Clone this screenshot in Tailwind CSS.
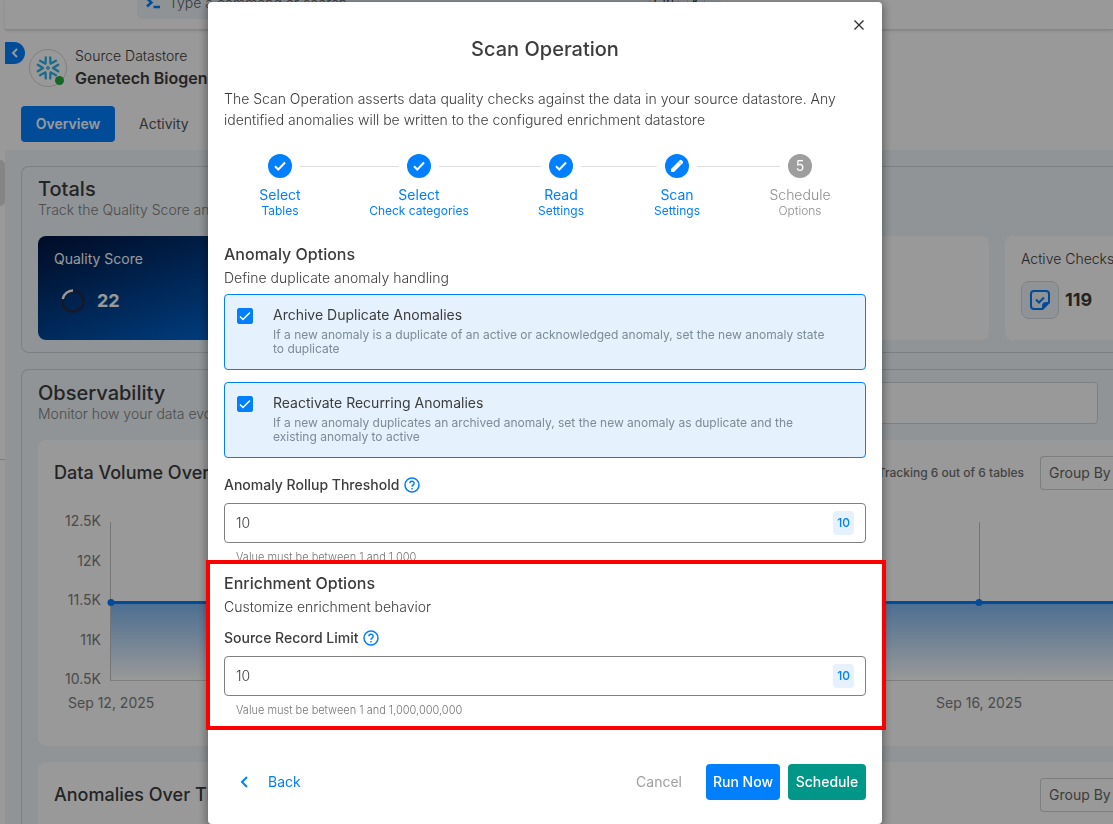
<!DOCTYPE html>
<html lang="en">
<head>
<meta charset="utf-8">
<meta name="viewport" content="width=device-width, initial-scale=1">
<title>Scan Operation</title>
<script src="https://cdn.jsdelivr.net/npm/@tailwindcss/browser@4"></script>
</head>
<body class="h-screen overflow-hidden bg-white font-['Inter',sans-serif] text-sm text-[#3c3c3c]">

<!-- Datastore page behind the dialog -->
<div class="flex h-screen overflow-hidden">
  <aside class="flex w-[5px] shrink-0 flex-col">
    <div class="mt-40 h-[46px] rounded-r-lg bg-[#dedede]"></div>
    <div class="mt-[253px] border-t border-[#d0d0d0]"></div>
  </aside>
  <main class="min-w-0 flex-1">
    <header class="relative h-[30px] border-b border-[#dcdcdc] pl-[132px] shadow-sm">
      <div class="flex h-[19px] w-[584px] items-start gap-2 rounded-b-md bg-[#eef5fb] pl-2">
        <svg class="mt-[-3px] h-3 w-4" viewBox="0 0 16 12" fill="none" stroke="#007fff" stroke-width="2.4"><path d="M2 1.5l4.5 4L2 9.500M8.500 10H15"/></svg>
        <span class="mt-[-7px] leading-5 font-light text-[#606060]">Type a command or search</span>
        <span class="mt-[-7px] ml-auto flex gap-2 pr-4 text-xs leading-4"><kbd class="rounded border border-[#cfcfcf] px-1 font-['Inter',sans-serif]">Ctrl</kbd><kbd class="rounded border border-[#cfcfcf] px-1 font-['Inter',sans-serif]">K</kbd></span>
      </div>
    </header>

    <div class="h-[120px] pt-3">
      <div class="flex gap-1">
        <button type="button" aria-label="Collapse" class="flex h-[22px] w-5 items-center justify-center rounded-r-full bg-[#007fff]">
          <svg class="h-3 w-3" viewBox="0 0 12 12" fill="none" stroke="#fff" stroke-width="2"><path d="M8 2L4 6l4 4"/></svg>
        </button>
        <div class="relative mt-[7px] flex size-[38px] items-center justify-center rounded-full border border-[#d6d6d6]">
          <svg class="size-6" viewBox="0 0 24 24" fill="none" stroke="#29b5e8" stroke-width="2.300" stroke-linecap="round" stroke-linejoin="round">
            <defs><path id="arm" d="M22.200 8.700L17 12l5.200 3.300"/></defs>
            <path d="M12 10.500L13.500 12 12 13.500 10.500 12z" stroke-width="1.200"/>
            <use href="#arm"/>
            <use href="#arm" transform="rotate(60 12 12)"/>
            <use href="#arm" transform="rotate(120 12 12)"/>
            <use href="#arm" transform="rotate(180 12 12)"/>
            <use href="#arm" transform="rotate(240 12 12)"/>
            <use href="#arm" transform="rotate(300 12 12)"/>
          </svg>
          <span class="absolute right-[2px] bottom-[1px] size-[9px] rounded-full bg-[#1fae3d]"></span>
        </div>
        <div class="ml-1 pt-1">
          <p class="leading-5 font-light">Source Datastore</p>
          <h1 class="text-base leading-6 font-semibold whitespace-nowrap">Genetech Biogenius</h1>
        </div>
      </div>
      <nav class="mt-4 ml-4 flex h-9 items-stretch">
        <a href="#" class="flex w-[94px] items-center justify-center rounded bg-[#007fff] font-semibold text-white">Overview</a>
        <a href="#" class="ml-6 flex items-center text-[#555555]">Activity</a>
      </nav>
    </div>

    <div class="h-[900px] bg-[#f0f7fc] pt-4 pl-4">
      <section class="h-[187px] rounded-l-lg border-y border-l border-[#d0d6da] pt-[11px] pl-4">
        <h2 class="text-xl leading-[22px] font-medium">Totals</h2>
        <p class="leading-5 font-light whitespace-nowrap text-[#808080]">Track the Quality Score and key metrics</p>
        <div class="mt-4 flex gap-4 overflow-hidden">
          <div class="h-[104px] w-[306px] shrink-0 rounded-lg bg-linear-to-br from-[#001540] to-[#007fff] px-4 pt-[13px] text-white">
            <h3 class="leading-5">Quality Score</h3>
            <div class="mt-[19px] flex items-center gap-3 pl-[7px]">
              <svg class="size-6" viewBox="0 0 24 24" fill="none" stroke-width="2.500"><circle cx="12" cy="12" r="10.500" stroke="#242b42"/><path d="M12 1.500A10.500 10.500 0 0 0 1.700 10" stroke="#fff"/></svg>
              <span class="text-lg leading-[26px] font-bold">22</span>
            </div>
          </div>
          <div class="h-[104px] w-[306px] shrink-0 rounded-lg bg-white"></div>
          <div class="h-[104px] w-[307px] shrink-0 rounded-lg bg-white"></div>
          <div class="h-[104px] w-[306px] shrink-0 rounded-lg bg-white px-4 pt-[13px]">
            <h3 class="leading-5 font-light">Active Checks</h3>
            <div class="mt-3 flex items-center gap-[6px]">
              <span class="flex size-[38px] items-center justify-center rounded-lg border border-[#d0d9e0] bg-[#eef5fb]">
                <svg class="size-5" viewBox="0 0 20 20" fill="none" stroke="#007fff" stroke-width="2"><path d="M12.500 19H4a3 3 0 0 1-3-3V4a3 3 0 0 1 3-3h12a3 3 0 0 1 3 3v8.500z" stroke-linejoin="round"/><path d="M12.500 19v-3.500a3 3 0 0 1 3-3H19z" fill="#007fff" stroke-width="1"/><path d="M6 9.500l3 3 5-5"/></svg>
              </span>
              <span class="text-lg font-bold">119</span>
            </div>
          </div>
        </div>
      </section>

      <section class="mt-4 h-[600px] rounded-l-lg border-t border-l border-[#d0d6da] pl-4">
        <div class="flex justify-between pt-3">
          <div>
            <h2 class="text-xl leading-[22px] font-medium">Observability</h2>
            <p class="leading-5 font-light whitespace-nowrap text-[#808080]">Monitor how your data evolves</p>
          </div>
          <input type="text" aria-label="Filter tables" class="mr-[15px] h-[42px] w-[300px] rounded border border-[#d0d6da] bg-white">
        </div>
        <article class="mt-4 h-[306px] rounded-l-lg bg-white pt-4">
          <div class="flex h-[34px] items-center pl-4">
            <h3 class="text-lg font-medium whitespace-nowrap">Data Volume Over Time</h3>
            <span class="ml-auto text-xs font-medium whitespace-nowrap text-[#707070]">Tracking 6 out of 6 tables</span>
            <button type="button" class="ml-4 h-[34px] w-[73px] rounded-l border-y border-l border-[#d0d0d0] pl-2 text-left whitespace-nowrap text-[#666666]">Group By</button>
          </div>
          <div class="mt-[21px] flex items-start text-[#7c7c7c]">
            <div class="flex h-[178px] w-[63px] shrink-0 flex-col justify-between text-right leading-5">
              <span>12.5K</span><span>12K</span><span>11.5K</span><span>11K</span><span>10.5K</span>
            </div>
            <svg class="my-[9px] ml-1 h-[162px] flex-1 overflow-hidden" fill="none">
              <defs><linearGradient id="area" x1="0" y1="0" x2="0" y2="1"><stop offset="0" stop-color="#7fb7f2"/><stop offset="1" stop-color="#fff"/></linearGradient></defs>
              <path d="M5.500 2v159M874.500 2v80" stroke="#c4c4c4"/>
              <rect x="6" y="82" width="100%" height="78" fill="url(#area)"/>
              <path d="M5 160.500h3000" stroke="#d0d0d0"/>
              <path d="M6 82.500h3000" stroke="#007fff" stroke-width="3"/>
              <circle cx="6" cy="82.500" r="3.500" fill="#007fff"/><circle cx="874" cy="82.500" r="3.500" fill="#007fff"/>
            </svg>
          </div>
          <div class="mt-[2px] flex justify-between pr-[91px] pl-[30px] leading-5 text-[#7c7c7c]"><span>Sep 12, 2025</span><span>Sep 16, 2025</span></div>
        </article>
        <article class="mt-4 h-[306px] rounded-l-lg bg-white pt-4">
          <div class="flex h-[34px] items-center justify-between pl-4">
            <h3 class="text-lg font-medium whitespace-nowrap">Anomalies Over Time</h3>
            <button type="button" class="h-[34px] w-[73px] rounded-l border-y border-l border-[#d0d0d0] pl-2 text-left whitespace-nowrap text-[#666666]">Group By</button>
          </div>
        </article>
      </section>
    </div>
  </main>
</div>

<!-- Dialog -->
<div class="fixed inset-0 flex items-start justify-center bg-black/40 pt-[2px] pr-[23px]">
  <div role="dialog" aria-modal="true" aria-labelledby="dialog-title" class="relative w-full max-w-[674px] rounded bg-white px-4 pb-6 shadow-[0_2px_8px_2px_rgba(0,0,0,0.35)]">
    <button type="button" aria-label="Close" class="absolute top-[15px] right-[15px] flex size-4 items-center justify-center">
      <svg class="size-3" viewBox="0 0 12 12" stroke="#333" stroke-width="1.400"><path d="M1.500 1.500l9 9M10.500 1.500l-9 9"/></svg>
    </button>
    <h2 id="dialog-title" class="pt-8 text-center text-xl leading-[30px] font-medium">Scan Operation</h2>
    <p class="mt-6 leading-[21px] font-light">The Scan Operation asserts data quality checks against the data in your source datastore. Any identified anomalies will be written to the configured enrichment datastore</p>

    <ol class="mt-6 flex h-[66px] items-start pr-[46px] pl-9 text-[#007fff]">
      <li class="flex w-10 shrink-0 flex-col items-center whitespace-nowrap">
        <svg class="size-6" viewBox="0 0 24 24" fill="none"><circle cx="12" cy="12" r="12" fill="#007fff"/><path d="M7 12.300l3.300 3.200 6.700-7" stroke="#fff" stroke-width="2"/></svg>
        <span class="mt-2 leading-[18px]">Select</span><span class="text-xs leading-[14px]">Tables</span>
      </li>
      <li aria-hidden="true" class="mt-3 h-px flex-99 bg-[#dedede]"></li>
      <li class="flex w-10 shrink-0 flex-col items-center whitespace-nowrap">
        <svg class="size-6" viewBox="0 0 24 24" fill="none"><circle cx="12" cy="12" r="12" fill="#007fff"/><path d="M7 12.300l3.300 3.200 6.700-7" stroke="#fff" stroke-width="2"/></svg>
        <span class="mt-2 leading-[18px]">Select</span><span class="text-xs leading-[14px]">Check categories</span>
      </li>
      <li aria-hidden="true" class="mt-3 h-px flex-102 bg-[#dedede]"></li>
      <li class="flex w-10 shrink-0 flex-col items-center whitespace-nowrap">
        <svg class="size-6" viewBox="0 0 24 24" fill="none"><circle cx="12" cy="12" r="12" fill="#007fff"/><path d="M7 12.300l3.300 3.200 6.700-7" stroke="#fff" stroke-width="2"/></svg>
        <span class="mt-2 leading-[18px]">Read</span><span class="text-xs leading-[14px]">Settings</span>
      </li>
      <li aria-hidden="true" class="mt-3 h-px flex-76 bg-[#dedede]"></li>
      <li class="flex w-10 shrink-0 flex-col items-center whitespace-nowrap">
        <svg class="size-6" viewBox="0 0 24 24"><circle cx="12" cy="12" r="12" fill="#007fff"/><path d="M6 18v-3l8.700-8.700q1-.9 2 0l1 1q.9 1 0 2L9 18z" fill="#fff"/><path d="M13.300 7.600l3.100 3.100" stroke="#007fff" stroke-width=".5"/></svg>
        <span class="mt-2 leading-[18px]">Scan</span><span class="text-xs leading-[14px]">Settings</span>
      </li>
      <li aria-hidden="true" class="mt-3 h-px flex-83 bg-[#dedede]"></li>
      <li class="flex w-10 shrink-0 flex-col items-center font-light whitespace-nowrap text-[#8e8e8e]">
        <span class="flex size-6 items-center justify-center rounded-full bg-[#9e9e9e] font-normal text-white">5</span>
        <span class="mt-2 leading-[18px]">Schedule</span><span class="text-xs leading-[14px]">Options</span>
      </li>
    </ol>

    <section class="pt-[22px]">
      <h3 class="text-base leading-6 font-medium">Anomaly Options</h3>
      <p class="mt-[2px] leading-5 font-light">Define duplicate anomaly handling</p>
      <label class="mt-[6px] flex h-[76px] gap-5 rounded border border-[#007fff] bg-[#e5f1fd] px-3 pt-[10px]">
        <span class="relative mt-[3px] size-4 shrink-0">
          <input type="checkbox" checked class="block size-4 appearance-none rounded-[2px] border border-[#007fff] bg-white checked:bg-[#007fff]">
          <svg class="pointer-events-none absolute inset-0 size-4" viewBox="0 0 16 16" fill="none" stroke="#fff" stroke-width="1.500"><path d="M3 8.500l3 3 7-7"/></svg>
        </span>
        <span class="flex flex-col pr-5">
          <span class="leading-5">Archive Duplicate Anomalies</span>
          <span class="mt-[3px] text-xs leading-[14px] text-[#7c8b95]">If a new anomaly is a duplicate of an active or acknowledged anomaly, set the new anomaly state <span class="whitespace-nowrap">to duplicate</span></span>
        </span>
      </label>
      <label class="mt-3 flex h-[76px] gap-5 rounded border border-[#007fff] bg-[#e5f1fd] px-3 pt-[10px]">
        <span class="relative mt-[3px] size-4 shrink-0">
          <input type="checkbox" checked class="block size-4 appearance-none rounded-[2px] border border-[#007fff] bg-white checked:bg-[#007fff]">
          <svg class="pointer-events-none absolute inset-0 size-4" viewBox="0 0 16 16" fill="none" stroke="#fff" stroke-width="1.500"><path d="M3 8.500l3 3 7-7"/></svg>
        </span>
        <span class="flex flex-col pr-5">
          <span class="leading-5">Reactivate Recurring Anomalies</span>
          <span class="mt-[3px] text-xs leading-[14px] text-[#7c8b95]">If a new anomaly duplicates an archived anomaly, set the new anomaly as duplicate and the existing anomaly to active</span>
        </span>
      </label>
      <div class="mt-[17px] flex items-center gap-[5px]">
        <label for="rollup" class="leading-5 font-medium">Anomaly Rollup Threshold</label>
        <svg class="size-4" viewBox="0 0 16 16" fill="none" stroke="#007fff" stroke-width="1.500"><circle cx="8" cy="8" r="7"/><path d="M5.900 6.300a2.100 2.100 0 1 1 3.300 1.700C8.400 8.500 8 8.900 8 9.800M8 10.900v1.500"/></svg>
      </div>
      <div class="mt-2 flex h-10 items-center rounded border border-[#808080] px-[11px]">
        <input id="rollup" type="text" value="10" class="min-w-0 flex-1 font-light outline-none">
        <span class="flex h-6 items-center rounded bg-[#e5f1fd] px-1 text-xs font-medium text-[#007fff]">10</span>
      </div>
      <p class="mt-[7px] pl-3 text-[11px] leading-[14px] font-light text-[#757575]">Value must be between 1 and 1,000</p>
    </section>

    <section class="relative mt-[7px]">
      <div class="pointer-events-none absolute -top-[11px] -right-5 -bottom-[13px] -left-[18px] border-4 border-[#fc0000]"></div>
      <h3 class="text-base leading-6 font-medium">Enrichment Options</h3>
      <p class="mt-[2px] leading-5 font-light">Customize enrichment behavior</p>
      <div class="mt-[11px] flex items-center gap-[5px]">
        <label for="record-limit" class="leading-5 font-medium">Source Record Limit</label>
        <svg class="size-4" viewBox="0 0 16 16" fill="none" stroke="#007fff" stroke-width="1.500"><circle cx="8" cy="8" r="7"/><path d="M5.900 6.300a2.100 2.100 0 1 1 3.300 1.700C8.400 8.500 8 8.900 8 9.800M8 10.900v1.500"/></svg>
      </div>
      <div class="mt-2 flex h-10 items-center rounded border border-[#808080] px-[11px]">
        <input id="record-limit" type="text" value="10" class="min-w-0 flex-1 font-light outline-none">
        <span class="flex h-6 items-center rounded bg-[#e5f1fd] px-1 text-xs font-medium text-[#007fff]">10</span>
      </div>
      <p class="mt-[7px] pl-3 text-[11px] leading-[14px] font-light text-[#757575]">Value must be between 1 and 1,000,000,000</p>
    </section>

    <footer class="mt-[47px] flex h-9 items-center">
      <button type="button" class="flex items-center gap-4 pl-[14px] text-[#007fff]">
        <svg class="h-[14px] w-[14px]" viewBox="0 0 14 14" fill="none" stroke="#007fff" stroke-width="2"><path d="M9 2L4 7l5 5"/></svg>
        Back
      </button>
      <button type="button" class="mr-6 ml-auto text-[#9e9e9e]">Cancel</button>
      <button type="button" class="h-9 w-[74px] rounded-sm bg-[#007fff] font-medium text-white">Run Now</button>
      <button type="button" class="ml-2 h-9 w-[78px] rounded-sm bg-[#009688] font-medium text-white">Schedule</button>
    </footer>
  </div>
</div>
</body>
</html>
